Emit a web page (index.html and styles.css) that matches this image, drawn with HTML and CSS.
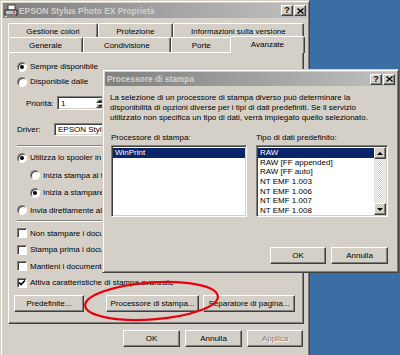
FILE: index.html
```html
<!DOCTYPE html>
<html>
<head>
<meta charset="utf-8">
<title>EPSON Stylus Photo EX Proprietà</title>
<link rel="stylesheet" href="styles.css">
</head>
<body>
<div class="desktop">
  <div class="win main">
    <div class="titlebar">
      <svg class="appicon" width="14" height="14" viewBox="0 0 14 14">
        <rect x="4" y="1" width="7" height="5" fill="#fff" stroke="#404040" stroke-width="1"/>
        <path d="M1 6h12v5H1z" fill="#c0c0c0" stroke="#202020" stroke-width="1"/>
        <path d="M2 11h10v2H2z" fill="#808080"/>
        <rect x="9" y="7.5" width="2" height="1.5" fill="#e03030"/>
        <path d="M3 12l-2 1" stroke="#fff" stroke-width="1"/>
      </svg>
      <span class="title">EPSON Stylus Photo EX Proprietà</span>
      <span class="tbtns">
        <span class="tbtn">?</span>
        <span class="tbtn"><svg width="7" height="6" viewBox="0 0 7 6"><path d="M0.5 0.5l6 5M6.5 0.5l-6 5" stroke="#000" stroke-width="1.4"/></svg></span>
      </span>
    </div>
    <div class="mainbody">
      <div class="tabs">
        <div class="tabrow back">
          <div class="tab">Gestione colori</div>
          <div class="tab">Protezione</div>
          <div class="tab">Informazioni sulla versione</div>
        </div>
        <div class="tabrow front">
          <div class="tab">Generale</div>
          <div class="tab">Condivisione</div>
          <div class="tab">Porte</div>
          <div class="tab sel">Avanzate</div>
        </div>
      </div>
      <div class="panel">
        <div class="opt row15"><span class="radio on"></span>Sempre disponibile</div>
        <div class="opt row15 clip"><span class="radio"></span>Disponibile dalle</div>
        <div class="field prio clip">
          <span class="flabel prio-label">Priorità:</span>
          <span class="spin"><span class="spin-val">1</span><span class="spin-btns"><span class="sbtn"><i class="tri up"></i></span><span class="sbtn"><i class="tri down"></i></span></span></span>
        </div>
        <div class="field drv clip">
          <span class="flabel drv-label">Driver:</span>
          <span class="combo">EPSON Stylus Photo EX</span>
        </div>
        <div class="sep sep1 clip"></div>
        <div class="opt row17 clip"><span class="radio on"></span>Utilizza lo spooler in modo da velocizzare la stampa</div>
        <div class="opt row17 indent clip"><span class="radio"></span>Inizia stampa al termine dello spooling dell'ultima pagina</div>
        <div class="opt row17 indent clip"><span class="radio on"></span>Inizia a stampare immediatamente</div>
        <div class="opt row17 clip"><span class="radio"></span>Invia direttamente alla stampante</div>
        <div class="sep sep2 clip"></div>
        <div class="opt row16 clip"><span class="check"></span>Non stampare i documenti non corrispondenti</div>
        <div class="opt row16 clip"><span class="check"></span>Stampa prima i documenti nello spooler</div>
        <div class="opt row16 clip"><span class="check"></span>Mantieni i documenti stampati</div>
        <div class="opt row16"><span class="check on"><svg width="8" height="8" viewBox="0 0 8 8"><path d="M1 3.5l2 2 4-4" fill="none" stroke="#000" stroke-width="1.6"/></svg></span>Attiva caratteristiche di stampa avanzate</div>
        <div class="panel-btns">
          <button class="btn w70">Predefinite...</button>
          <div class="btn-group">
            <button class="btn w93">Processore di stampa...</button>
            <button class="btn w92">Separatore di pagina...</button>
          </div>
        </div>
      </div>
      <div class="footer">
        <button class="btn w57">OK</button>
        <button class="btn w57">Annulla</button>
        <button class="btn w56 disabled">Applica</button>
      </div>
    </div>
  </div>

  <div class="win dlg">
    <div class="titlebar small">
      <span class="title dtitle">Processore di stampa</span>
      <span class="tbtns">
        <span class="tbtn">?</span>
        <span class="tbtn"><svg width="7" height="6" viewBox="0 0 7 6"><path d="M0.5 0.5l6 5M6.5 0.5l-6 5" stroke="#000" stroke-width="1.4"/></svg></span>
      </span>
    </div>
    <div class="dlgbody">
      <p class="desc">La selezione di un processore di stampa diverso può determinare la<br>disponibilità di opzioni diverse per i tipi di dati predefiniti. Se il servizio<br>utilizzato non specifica un tipo di dati, verrà impiegato quello selezionato.</p>
      <div class="cols">
        <div class="col col1">
          <div class="clabel">Processore di stampa:</div>
          <div class="list">
            <div class="items">
              <div class="item sel">WinPrint</div>
            </div>
          </div>
        </div>
        <div class="col col2">
          <div class="clabel">Tipo di dati predefinito:</div>
          <div class="list">
            <div class="items">
              <div class="item sel">RAW</div>
              <div class="item">RAW [FF appended]</div>
              <div class="item">RAW [FF auto]</div>
              <div class="item">NT EMF 1.003</div>
              <div class="item">NT EMF 1.006</div>
              <div class="item">NT EMF 1.007</div>
              <div class="item">NT EMF 1.008</div>
            </div>
            <div class="vscroll">
              <span class="sbtn big"><i class="tri up"></i></span>
              <span class="track"></span>
              <span class="sbtn big"><i class="tri down"></i></span>
            </div>
          </div>
        </div>
      </div>
      <div class="dfooter">
        <button class="btn w56">OK</button>
        <button class="btn w57">Annulla</button>
      </div>
    </div>
  </div>

  <svg class="mark" width="160" height="60" viewBox="0 0 160 60">
    <ellipse cx="73.5" cy="27" rx="66.5" ry="18.5" transform="rotate(-4 73.5 27)" fill="none" stroke="#e8000c" stroke-width="2.2"/>
  </svg>
</div>
</body>
</html>
```
FILE: styles.css
```css
* { box-sizing: border-box; }
html, body { margin: 0; padding: 0; }
body {
  width: 400px;
  height: 355px;
  overflow: hidden;
  background: #3a6ea5;
  font-family: "Liberation Sans", Arial, sans-serif;
  font-size: 8px;
  color: #000;
}
.desktop { position: relative; width: 400px; height: 355px; }

/* windows */
.win {
  position: absolute;
  background: #d4d0c8;
  border: 1px solid;
  border-color: #d4d0c8 #404040 #404040 #d4d0c8;
  box-shadow: inset 1px 1px #fff, inset -1px -1px #808080;
  padding: 2px;
  display: flex;
  flex-direction: column;
}
.main { left: 0; top: 0; width: 310px; height: 372px; }
.dlg { left: 102px; top: 69px; width: 297px; height: 204px; z-index: 5; }

.titlebar {
  height: 15px;
  flex: none;
  display: flex;
  align-items: center;
  background: linear-gradient(to right, #808080, #c0c0c0);
  color: #d4d0c8;
  font-weight: bold;
  font-size: 8.4px;
  padding-left: 1px;
  padding-right: 1px;
}
.titlebar.small { height: 14px; padding-left: 2px; }
.appicon { flex: none; margin-right: 1px; }
.title { flex: 1; white-space: nowrap; }
.tbtns { display: flex; gap: 1px; flex: none; }
.tbtn {
  width: 12px;
  height: 11px;
  display: flex;
  align-items: center;
  justify-content: center;
  background: #d4d0c8;
  border: 1px solid;
  border-color: #fff #404040 #404040 #fff;
  box-shadow: inset -1px -1px #808080;
  color: #000;
  font-size: 9px;
  font-weight: bold;
  line-height: 1;
}

.mainbody {
  flex: 1;
  display: flex;
  flex-direction: column;
  padding: 5px 3px 0 5px;
}

/* tabs */
.tabs { display: flex; flex-direction: column; }
.tabrow { display: flex; }
.tabrow.back { height: 14px; }
.tabrow.front { height: 15px; }
.tab {
  flex: 1 1 auto;
  border: 1px solid;
  border-bottom: none;
  border-color: #fff #404040 transparent #fff;
  box-shadow: inset -1px 0 #808080;
  border-radius: 2px 2px 0 0;
  text-align: center;
  white-space: nowrap;
  display: flex;
  align-items: center;
  justify-content: center;
  padding-top: 1px;
  background: #d4d0c8;
}
.tab.sel {
  position: relative;
  z-index: 2;
  margin: -1px -1px -1px -2px;
  padding-bottom: 2px;
}

/* panel */
.panel {
  position: relative;
  z-index: 1;
  height: 272px;
  border: 1px solid;
  border-color: #fff #404040 #404040 #fff;
  box-shadow: inset -1px -1px #808080;
  padding: 6px 8px 0 8px;
  display: flex;
  flex-direction: column;
}
.clip { width: 85px; overflow: hidden; }
.opt {
  display: flex;
  align-items: center;
  white-space: nowrap;
}
.row15 { height: 15px; }
.row17 { height: 17.5px; }
.row16 { height: 16.5px; }
.indent { padding-left: 13px; }

.radio {
  position: relative;
  width: 10px;
  height: 10px;
  flex: none;
  border-radius: 50%;
  background: #fff;
  border: 1px solid;
  border-color: #808080 #fff #fff #808080;
  box-shadow: inset 1px 1px #404040;
  margin-right: 3px;
}
.radio.on::after {
  content: "";
  position: absolute;
  left: 2px;
  top: 2px;
  width: 4px;
  height: 4px;
  border-radius: 50%;
  background: #000;
}
.check {
  width: 10px;
  height: 10px;
  flex: none;
  background: #fff;
  border: 1px solid;
  border-color: #808080 #fff #fff #808080;
  box-shadow: inset 1px 1px #404040;
  margin-right: 3px;
  display: flex;
  align-items: center;
  justify-content: center;
}

.field { display: flex; align-items: center; white-space: nowrap; flex: none; }
.prio { margin-top: 7px; height: 14px; padding-left: 9px; }
.prio-label { width: 31px; flex: none; }
.drv { margin-top: 12px; height: 14px; }
.drv-label { width: 37px; flex: none; }

.spin, .combo {
  flex: none;
  background: #fff;
  border: 1px solid;
  border-color: #808080 #fff #fff #808080;
  box-shadow: inset 1px 1px #404040, inset -1px -1px #d4d0c8;
  display: flex;
  align-items: center;
}
.spin { width: 49px; height: 14px; padding: 2px 2px 2px 3px; }
.spin-val { flex: 1; }
.spin-btns { display: flex; flex-direction: column; width: 7px; height: 10px; }
.spin-btns .sbtn { flex: 1; }
.combo { width: 240px; height: 13px; padding-left: 3px; }

.sbtn {
  display: flex;
  align-items: center;
  justify-content: center;
  background: #d4d0c8;
  border: 1px solid;
  border-color: #fff #404040 #404040 #fff;
  box-shadow: inset -1px -1px #808080;
}
.tri { display: block; width: 0; height: 0; border-left: 2px solid transparent; border-right: 2px solid transparent; }
.tri.up { border-bottom: 2px solid #000; }
.tri.down { border-top: 2px solid #000; }
.sbtn.big { height: 12px; }
.sbtn.big .tri { border-left-width: 3px; border-right-width: 3px; }
.sbtn.big .tri.up { border-bottom-width: 3px; }
.sbtn.big .tri.down { border-top-width: 3px; }

.sep {
  height: 2px;
  border-top: 1px solid #808080;
  border-bottom: 1px solid #fff;
  flex: none;
}
.sep1 { margin-top: 9px; margin-bottom: 2px; }
.sep2 { margin-top: 1px; margin-bottom: 3px; }

.panel-btns {
  margin-top: 4px;
  margin-left: -3px;
  display: flex;
  justify-content: space-between;
}
.btn-group { display: flex; gap: 4px; }

.btn {
  height: 17px;
  padding: 0;
  font: inherit;
  color: #000;
  background: #d4d0c8;
  border: 1px solid;
  border-color: #fff #404040 #404040 #fff;
  box-shadow: inset -1px -1px #808080;
  white-space: nowrap;
}
.btn.disabled { color: #808080; text-shadow: 1px 1px #fff; }
.w56 { width: 56px; }
.w57 { width: 57px; }
.w70 { width: 70px; }
.w92 { width: 92px; }
.w93 { width: 93px; }

.footer {
  display: flex;
  justify-content: flex-end;
  gap: 5px;
  margin-top: 6px;
  padding-right: 1px;
}

/* dialog */
.dlgbody {
  flex: 1;
  padding: 0 8px 0 6px;
  display: flex;
  flex-direction: column;
}
.desc {
  margin: 7px 0 0 -1px;
  line-height: 10px;
  white-space: nowrap;
}
.cols { display: flex; gap: 9px; margin-top: 10px; }
.col1 { width: 136px; }
.col2 { width: 132px; }
.clabel { line-height: 10px; height: 10px; margin-bottom: 2px; white-space: nowrap; }
.list {
  height: 72px;
  background: #fff;
  border: 1px solid;
  border-color: #808080 #fff #fff #808080;
  box-shadow: inset 1px 1px #404040, inset -1px -1px #d4d0c8;
  padding: 1px;
  display: flex;
}
.items { flex: 1; overflow: hidden; padding-top: 1px; }
.item {
  height: 9.7px;
  line-height: 9.7px;
  padding-left: 2px;
  white-space: nowrap;
}
.item.sel { background: #0a246a; color: #fff; }
.vscroll {
  width: 12px;
  flex: none;
  display: flex;
  flex-direction: column;
}
.track {
  flex: 1;
  background: repeating-conic-gradient(#fff 0 25%, #d4d0c8 0 50%) 0 0 / 2px 2px;
}
.dfooter {
  display: flex;
  justify-content: flex-end;
  gap: 5px;
  margin-top: 30px;
}

.mark {
  position: absolute;
  left: 78px;
  top: 274px;
  z-index: 10;
}
```
